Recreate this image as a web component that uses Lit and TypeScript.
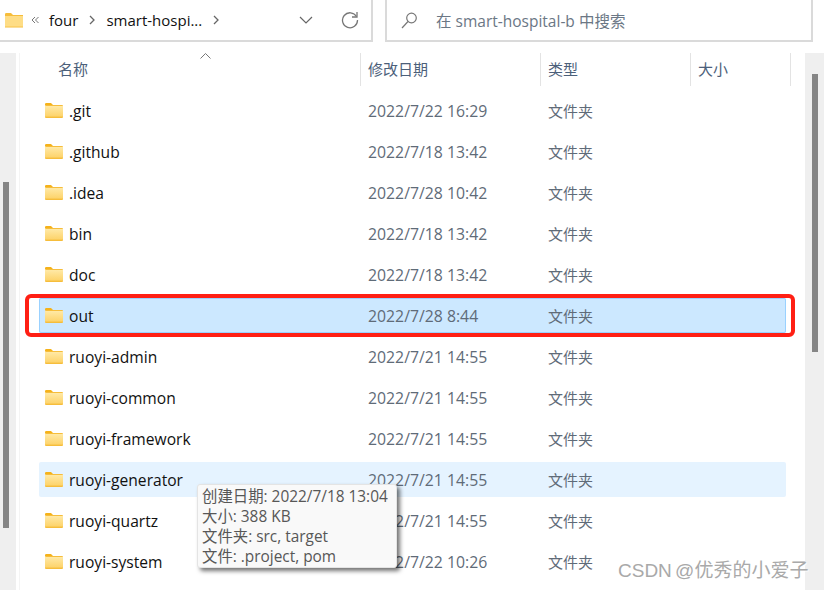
import { LitElement, html, css, svg } from "lit";
import { customElement } from "lit/decorators.js";

const rows: [string, string, string][] = [
  [".git", "2022/7/22 16:29", ""],
  [".github", "2022/7/18 13:42", ""],
  [".idea", "2022/7/28 10:42", ""],
  ["bin", "2022/7/18 13:42", ""],
  ["doc", "2022/7/18 13:42", ""],
  ["out", "2022/7/28 8:44", "sel"],
  ["ruoyi-admin", "2022/7/21 14:55", ""],
  ["ruoyi-common", "2022/7/21 14:55", ""],
  ["ruoyi-framework", "2022/7/21 14:55", ""],
  ["ruoyi-generator", "2022/7/21 14:55", "hov"],
  ["ruoyi-quartz", "2022/7/21 14:55", ""],
  ["ruoyi-system", "2022/7/22 10:26", ""],
];

const folder = svg`<svg class="folder" width="18" height="15" viewBox="0 0 18 15">
  <path d="M0 1.2Q0 0 1.2 0H6L8 2H0Z" fill="#f5b21a"/>
  <rect x="0" y="2" width="18" height="13" rx="1" fill="#f6bd3b"/>
  <defs><linearGradient id="fg" x1="0" y1="0" x2="0" y2="1"><stop offset="0" stop-color="#ffe9a6"/><stop offset="1" stop-color="#fdd36a"/></linearGradient></defs>
  <rect x="0" y="3" width="18" height="10.6" fill="url(#fg)"/>
</svg>`;

@customElement("app-root")
export class AppRoot extends LitElement {
  static styles = css`
    :host {
      display: block;
      position: relative;
      width: 824px;
      height: 590px;
      overflow: hidden;
      background: #fff;
      font-family: "Open Sans", "Noto Sans CJK SC", sans-serif;
      font-size: 15px;
      color: #5f6b78;
    }
    .toolbar {
      display: flex;
      height: 42px;
      gap: 12px;
      box-sizing: border-box;
    }
    .address, .search {
      display: flex;
      align-items: center;
      box-sizing: border-box;
      height: 42px;
      border-bottom: 2px solid #dadada;
      border-right: 2px solid #dadada;
    }
    .address { width: 373px; padding-left: 5px; color: #111; }
    .search { width: 428px; border-left: 2px solid #dadada; padding-left: 14px; color: #6b7785; font-size: 15.500px; }
    .search svg { margin-right: 18px; }
    .crumb-sep { margin: 0 11px; display: block; }
    .dbl { margin: 0 10px 0 8px; display: block; }
    .sp { flex: 1; }
    .chev { margin-right: 28px; display: block; }
    .refresh { margin-right: 12px; display: block; }
    .main {
      display: flex;
      height: 548px;
      padding-top: 11px;
      box-sizing: border-box;
    }
    .sb-left {
      width: 16px;
      background: #efefef;
      box-sizing: border-box;
      padding: 129px 0 0 3px;
      margin-right: 3px;
      flex: none;
    }
    .sb-left .thumb { width: 6px; height: 346px; background: #858585; }
    .list {
      width: 786px;
      flex: none;
      box-sizing: border-box;
      border-left: 1px solid #f4f4f4;
      height: 100%;
    }
    .sb-right {
      width: 19px;
      flex: none;
      background: #efefef;
      padding: 21px 0 0 7px;
      box-sizing: border-box;
    }
    .sb-right .thumb { width: 6px; height: 278px; background: #858585; }
    .head {
      display: grid;
      grid-template-columns: 341px 180px 150px 100px;
      height: 32px;
      color: #4c607a;
      position: relative;
      margin-bottom: 8px;
    }
    .head > div {
      border-right: 1px solid #e3e3e3;
      padding-left: 7px;
      line-height: 33px;
      font-size: 15px;
      box-sizing: border-box;
    }
    .head > div:first-child { padding-left: 38px; }
    .caret { position: absolute; left: 180px; top: 0; }
    .rows { display: flex; flex-direction: column; gap: 6px; padding-left: 19px; }
    .row {
      display: grid;
      grid-template-columns: 24px 299px 180px auto;
      width: 747px;
      height: 35px;
      align-items: center;
      box-sizing: border-box;
      padding-left: 6px;
      border-radius: 2px;
    }
    .row .folder { display: block; align-self: start; margin-top: 10px; }
    .row .name { color: #111; font-size: 15.600px; }
    .row .date { font-size: 15.800px; }
    .row.sel { background: #cce8ff; box-shadow: inset 0 0 0 1px #99d1ff; }
    .row.hov { background: #e5f3ff; }
    .red {
      position: absolute;
      left: 25px;
      top: 294px;
      width: 770px;
      height: 43px;
      box-sizing: border-box;
      border: 4px solid #ff1f14;
      border-radius: 6px;
      pointer-events: none;
    }
    .tip {
      position: absolute;
      left: 197px;
      top: 484px;
      width: 200px;
      height: 84px;
      box-sizing: border-box;
      padding: 2px 0 0 4px;
      background: #f9f9f9;
      border: 1px solid #e4e4e4;
      border-radius: 3px;
      box-shadow: 3px 3px 4px rgba(0,0,0,0.55);
      color: #575757;
      font-size: 15.400px;
      line-height: 20px;
      white-space: nowrap;
    }
    .mark {
      position: absolute;
      left: 618px;
      top: 559px;
      font-family: "Liberation Sans", "Noto Sans CJK SC", sans-serif;
      font-size: 19px;
      line-height: 24px;
      word-spacing: -2px;
      color: #a9a9a9;
      text-shadow: 1px 1px 1px rgba(255,255,255,0.8);
      white-space: nowrap;
    }
  `;

  render() {
    return html`
      <div class="toolbar">
        <div class="address">
          <svg width="18" height="15" viewBox="0 0 18 15" style="display:block">
            <path d="M0 1.2Q0 0 1.2 0H6L8 2H18V14.5H0Z" fill="#f6bd3b"/>
            <rect x="0" y="3" width="18" height="10.6" fill="#fedd86"/>
          </svg>
          <svg class="dbl" width="8" height="8" viewBox="0 0 8 8" fill="none" stroke="#777" stroke-width="1">
            <path d="M4 1 1 4l3 3M7.500 1l-3 3 3 3"/>
          </svg>
          <span>four</span>
          <svg class="crumb-sep" width="6" height="10" viewBox="0 0 6 10" fill="none" stroke="#666" stroke-width="1.300">
            <path d="M1 1l4 4-4 4"/>
          </svg>
          <span>smart-hospi...</span>
          <svg class="crumb-sep" width="6" height="10" viewBox="0 0 6 10" fill="none" stroke="#666" stroke-width="1.300">
            <path d="M1 1l4 4-4 4"/>
          </svg>
          <span class="sp"></span>
          <svg class="chev" width="14" height="8" viewBox="0 0 14 8" fill="none" stroke="#666" stroke-width="1.200">
            <path d="M1 1l6 6 6-6"/>
          </svg>
          <svg class="refresh" width="18" height="18" viewBox="0 0 18 18" fill="none" stroke="#777" stroke-width="1.300">
            <path d="M15.500 5.500A7.500 7.500 0 1 0 16.500 9"/>
            <path d="M16 1v5h-5"/>
          </svg>
        </div>
        <div class="search">
          <svg width="17" height="17" viewBox="0 0 17 17" fill="none" stroke="#777" stroke-width="1.200">
            <circle cx="10.500" cy="6" r="4.800"/>
            <path d="M7 9.500 1 16"/>
          </svg>
          <span>在 smart-hospital-b 中搜索</span>
        </div>
      </div>
      <div class="main">
        <div class="sb-left"><div class="thumb"></div></div>
        <div class="list">
          <div class="head">
            <div>名称</div><div>修改日期</div><div>类型</div><div>大小</div>
            <svg class="caret" width="11" height="6" viewBox="0 0 11 6" fill="none" stroke="#777" stroke-width="1">
              <path d="M.5 5.500l5-5 5 5"/>
            </svg>
          </div>
          <div class="rows">
            ${rows.map(([n, d, c]) => html`
              <div class="row ${c}">
                ${folder}
                <span class="name">${n}</span>
                <span class="date">${d}</span>
                <span>文件夹</span>
              </div>`)}
          </div>
        </div>
        <div class="sb-right"><div class="thumb"></div></div>
      </div>
      <div class="red"></div>
      <div class="tip">
        <div>创建日期: 2022/7/18 13:04</div>
        <div>大小: 388 KB</div>
        <div>文件夹: src, target</div>
        <div>文件: .project, pom</div>
      </div>
      <div class="mark">CSDN @优秀的小爱子</div>
    `;
  }
}
